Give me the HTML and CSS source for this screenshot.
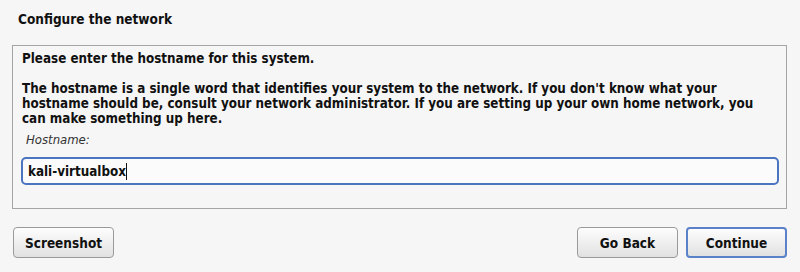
FILE: index.html
```html
<!DOCTYPE html>
<html>
<head>
<meta charset="utf-8">
<link rel="stylesheet" href="styles.css">
</head>
<body>
<div class="page">
  <h1 class="title">Configure the network</h1>
  <div class="panel">
    <p class="question">Please enter the hostname for this system.</p>
    <p class="desc">The hostname is a single word that identifies your system to the network. If you don't know what your<br>hostname should be, consult your network administrator. If you are setting up your own home network, you<br>can make something up here.</p>
    <label class="label" for="host">Hostname:</label>
    <div class="field"><span class="value">kali-virtualbox</span><span class="caret"></span></div>
  </div>
  <div class="actions">
    <button class="btn">Screenshot</button>
    <div class="spacer"></div>
    <button class="btn">Go Back</button>
    <button class="btn primary">Continue</button>
  </div>
</div>
</body>
</html>
```
FILE: styles.css
```css
html, body {
  margin: 0;
  padding: 0;
  background: #f6f6f6;
}
body {
  width: 800px;
  height: 272px;
  overflow: hidden;
  font-family: "DejaVu Sans Condensed", "DejaVu Sans", sans-serif;
  font-stretch: condensed;
  font-size: 13.3px;
  color: #111;
}
.page {
  padding: 0 13px 0 12px;
}
.title {
  margin: 0;
  font-size: 13.5px;
  font-weight: bold;
  padding: 11px 0 0 6px;
  height: 45px;
  box-sizing: border-box;
  line-height: 16px;
}
.panel {
  border: 1px solid #a4a4a4;
  height: 164px;
  box-sizing: border-box;
  padding: 5px 7px 0 9px;
}
.question {
  margin: 0;
  font-weight: bold;
  line-height: 15px;
}
.desc {
  margin: 15px 0 0 0;
  font-weight: bold;
  line-height: 15px;
}
.label {
  display: block;
  font-style: italic;
  font-size: 13px;
  color: #333;
  margin: 6px 0 0 4px;
  line-height: 16px;
}
.field {
  margin: 9px 0 0 -1px;
  height: 28px;
  box-sizing: border-box;
  border: 2px solid #4b74c1;
  border-radius: 5px;
  background: #fbfbfb;
  display: flex;
  align-items: center;
  padding-left: 5px;
  font-weight: bold;
}
.caret {
  display: inline-block;
  width: 1px;
  height: 17px;
  background: #111;
}
.actions {
  display: flex;
  align-items: center;
  margin-top: 18px;
  gap: 8px;
}
.spacer { flex: 1; }
.btn {
  width: 101px;
  height: 31px;
  border: 1px solid #9a9a9a;
  border-radius: 4px;
  background: linear-gradient(#fdfdfd, #e1e1e1);
  font-family: inherit;
  font-stretch: condensed;
  font-size: 13.5px;
  font-weight: bold;
  color: #111;
  padding: 0;
}
.btn:first-child { margin-left: 1px; }
.btn.primary {
  border: 2px solid #5b82c8;
}
```
